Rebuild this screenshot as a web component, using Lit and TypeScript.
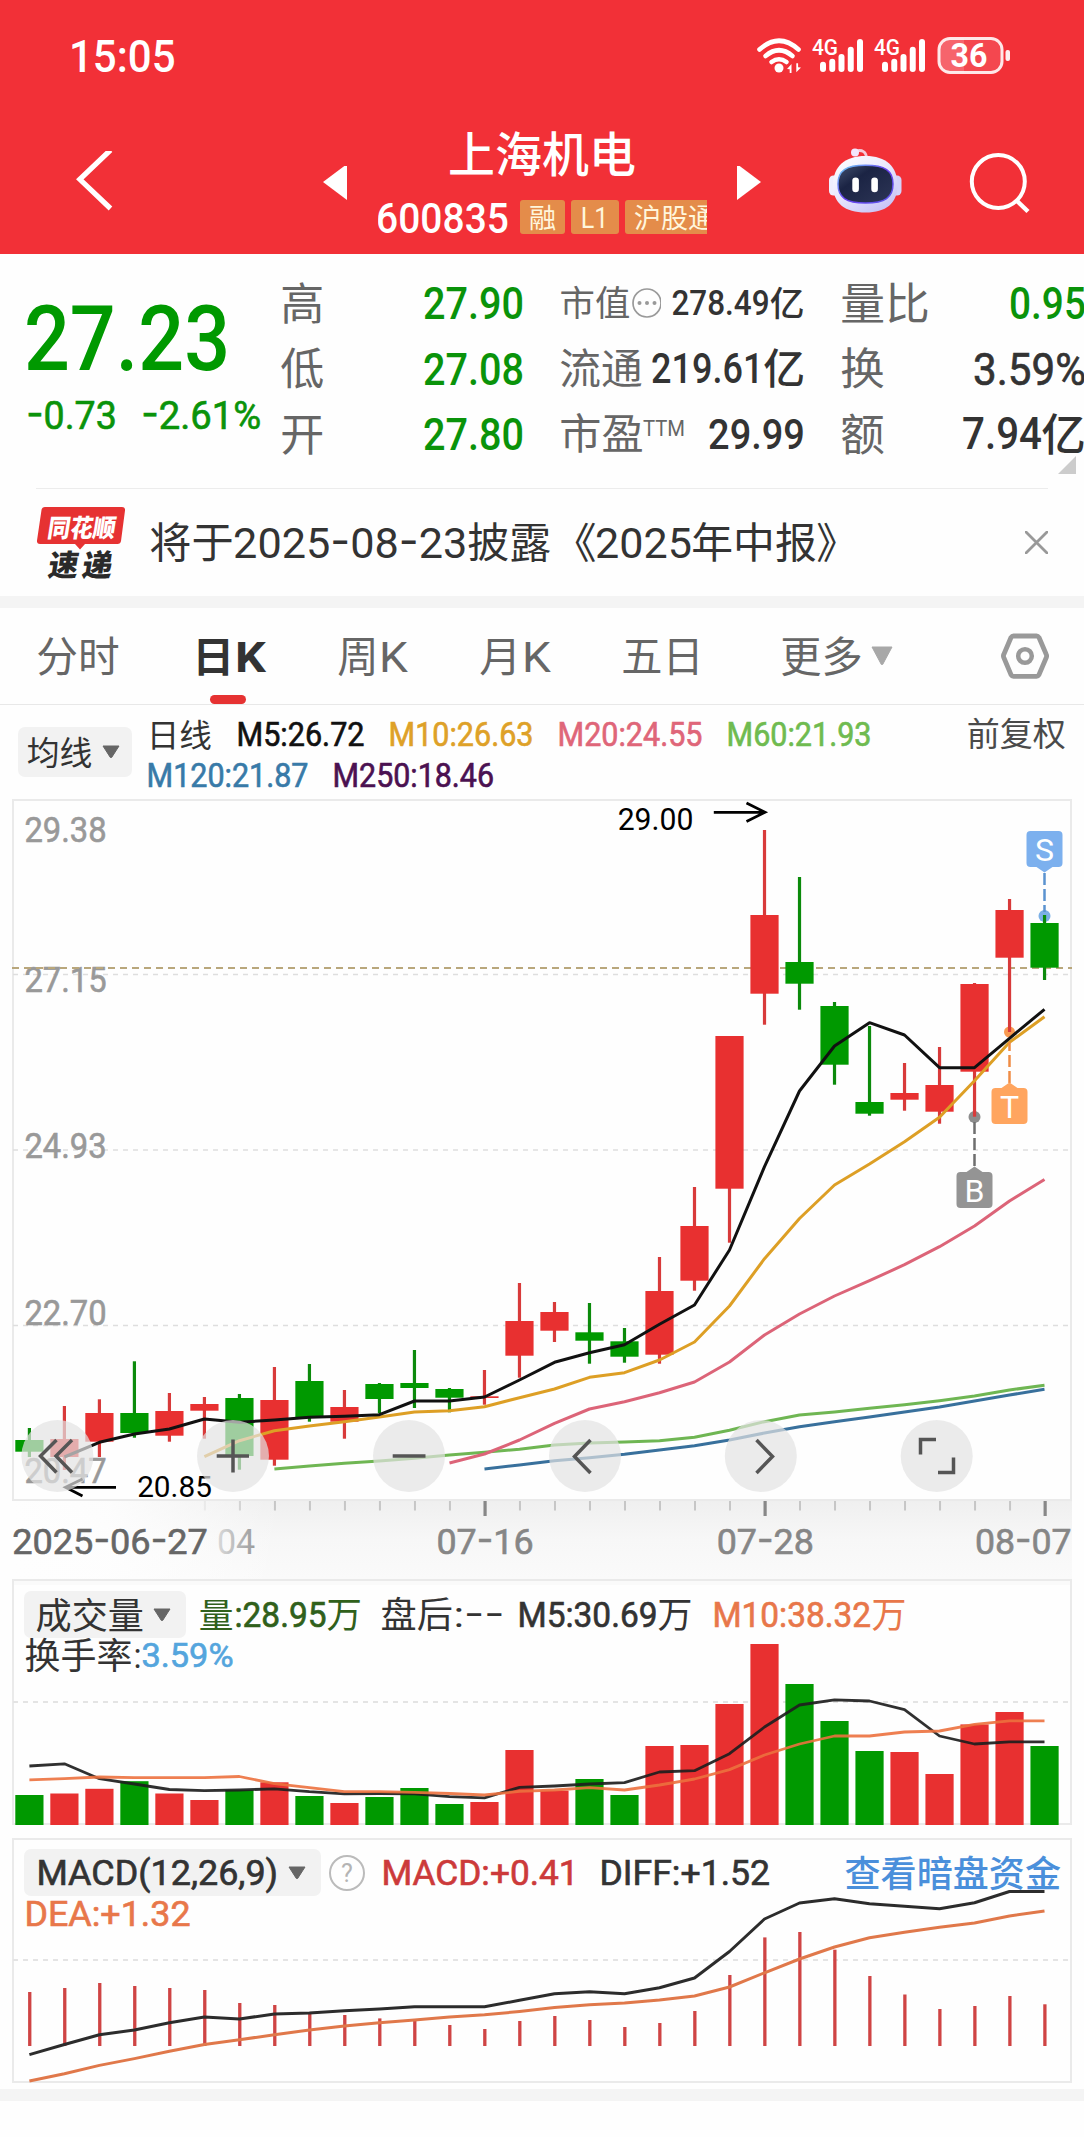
import { LitElement, html, svg, css, nothing } from "lit";
import { customElement } from "lit/decorators.js";

const RED = "#e83030";
const GREEN = "#009900";

/* Splits on hyphens so that dashes can use a wider, cap-centred glyph. */
const dashed = (s: string) =>
  s.split(/(-)/).filter(Boolean).map((p) => (p === "-" ? svg`<tspan class="dash">-</tspan>` : svg`<tspan>${p}</tspan>`));

/* Latin text: w is the ink width, cap the height of the capitals. */
const num = (s: string, w: number, cap: number, cls = "") => {
  const fs = cap / 0.711;
  return html`<svg class="t ${cls}" width=${w} height=${cap}>${svg`<text x=${-0.045 * fs} y=${cap} font-size=${fs} textLength=${w + 0.09 * fs} lengthAdjust="spacingAndGlyphs">${dashed(s)}</text>`}</svg>`;
};

/* Chinese text: w is the ink width, em the font size. */
const han = (s: string, w: number, em: number, cls = "") =>
  html`<svg class="t ${cls}" width=${w} height=${em * 0.92}>${svg`<text x=${-0.04 * em} y=${0.84 * em} font-size=${em} textLength=${w + 0.08 * em} lengthAdjust="spacingAndGlyphs">${s}</text>`}</svg>`;

/* Latin text placed on a chart canvas. */
const mark = (s: string, x: number, base: number, w: number, cap: number, cls: string) => {
  const fs = cap / 0.711;
  return svg`<text class=${cls} x=${x - 0.045 * fs} y=${base} font-size=${fs} textLength=${w + 0.09 * fs} lengthAdjust="spacingAndGlyphs">${dashed(s)}</text>`;
};

const X = (i: number) => 29.4 + i * 35.005;
const line = (start: number, ys: number[], color: string, w = 3) =>
  svg`<polyline fill="none" stroke=${color} stroke-width=${w} stroke-linejoin="round" points=${ys.map((y, k) => `${X(start + k).toFixed(1)},${y}`).join(" ")} />`;

/* body top, body bottom, high, low, rising */
const candles: [number, number, number, number, number][] = [
  [1440, 1451.7, 1428, 1457, 0], [1439, 1457, 1406, 1470, 1], [1413, 1441.7, 1399.3, 1457, 1],
  [1413, 1433, 1361.3, 1437.7, 0], [1411, 1435.7, 1393, 1441.7, 1], [1404, 1410.7, 1397, 1438.7, 1],
  [1398, 1456, 1394, 1469.7, 0], [1400, 1459.7, 1367, 1465.7, 1], [1381, 1417.7, 1364, 1421.7, 0],
  [1407, 1421.7, 1390, 1438.7, 1], [1384, 1399, 1383, 1413.3, 0], [1383, 1388, 1350, 1408, 0],
  [1389, 1397.7, 1388, 1412.3, 0], [1396.3, 1398, 1370, 1404.7, 1], [1321, 1355.7, 1283, 1377.7, 1],
  [1312, 1330.7, 1302, 1342, 1], [1332.3, 1340.7, 1303, 1363.7, 0], [1341.3, 1356.7, 1328, 1362.7, 0],
  [1291, 1354.7, 1257, 1363.7, 1], [1226, 1280.7, 1187, 1290.7, 1], [1036, 1188.7, 1036, 1242.7, 1],
  [915, 993.7, 830, 1024.7, 1], [962, 983.7, 877, 1009.7, 0], [1006, 1064.7, 1002, 1084.7, 0],
  [1102, 1113.7, 1026, 1115.7, 0], [1093, 1099.7, 1063, 1110.7, 1], [1085, 1111.7, 1047, 1123.7, 1],
  [984, 1071.7, 983, 1116.7, 1], [910, 957.7, 899, 1032, 1], [923, 967.7, 915, 980, 0],
];
const ma5 = [1457, 1442.3, 1434, 1429, 1419, 1422.3, 1420, 1417.3, 1416.3, 1414.7, 1401, 1401, 1397, 1380, 1362.3, 1352.7, 1344.7, 1324.3, 1305, 1250, 1166.7, 1091, 1046, 1022.7, 1035, 1067.7, 1067.7, 1038.3, 1009.3];
const ma10 = [1456.7, 1440.7, 1430.7, 1426, 1421.7, 1417, 1412, 1410.7, 1406.7, 1397.7, 1389, 1377.3, 1372.7, 1360, 1342, 1306, 1258.7, 1218.5, 1185, 1164, 1141.7, 1117.3, 1080.7, 1042.3, 1016.7];
const ma20 = [1463, 1454, 1440, 1423.3, 1409, 1401.7, 1392.7, 1382, 1362, 1335, 1314, 1296, 1280.7, 1264.7, 1246.7, 1226, 1201, 1179.5];
const ma60 = [1469, 1466, 1463.3, 1461, 1458.3, 1455, 1452.3, 1449.3, 1445, 1443, 1442, 1440.7, 1437.3, 1430.3, 1421.7, 1415, 1412, 1408.3, 1404.7, 1400.7, 1396, 1390, 1385.3];
const ma120 = [1469, 1465, 1460.7, 1457.7, 1454.3, 1450, 1445.7, 1440, 1433, 1426.7, 1421.7, 1417, 1412, 1407, 1401, 1395, 1389.3];

const vol = [1795, 1793.5, 1788.8, 1781.2, 1793.5, 1800, 1790, 1782.3, 1796, 1803, 1797, 1788, 1804, 1802, 1750, 1790.6, 1779, 1795, 1746, 1745, 1704, 1644, 1684, 1721, 1751, 1752, 1774, 1724.4, 1712, 1746];
const vol5 = [1766, 1763.8, 1778.7, 1784, 1789.5, 1790.6, 1790, 1788.8, 1791.7, 1793.8, 1793.5, 1793.8, 1796.7, 1797.8, 1787.3, 1786, 1784, 1782.6, 1772, 1770.7, 1753.7, 1727, 1705, 1699.8, 1701, 1709.6, 1736, 1744, 1741.8, 1741.8];
const vol10 = [1779.8, 1778.7, 1777, 1777.6, 1777.6, 1777.6, 1776.5, 1783.7, 1787.7, 1791.7, 1791.7, 1792.4, 1793.5, 1795, 1791.3, 1790, 1787.7, 1790, 1785, 1779, 1769.6, 1755, 1744, 1736, 1736, 1732, 1731, 1724.4, 1720.8, 1720.8];

const macd = [1992, 1988, 1983, 1986, 1988, 1990, 2003, 2005, 2012, 2015, 2018.4, 2021, 2025, 2029, 2021, 2016, 2020, 2027, 2023, 2011, 1975, 1937.4, 1932, 1949.7, 1976, 1994.5, 2009, 2006, 1996, 2004.3];
const diff = [2054.6, 2044.5, 2034.7, 2030, 2022.8, 2017, 2019, 2014, 2013, 2010.8, 2009, 2006.8, 2006.8, 2006.8, 2000.3, 1993.8, 1991.7, 1993.8, 1987.7, 1978, 1951.5, 1919, 1903, 1898.7, 1903.8, 1906.3, 1908.8, 1902.7, 1891.5, 1891.5];
const dea = [2081, 2073.8, 2065.4, 2058.6, 2051.3, 2044.5, 2039.8, 2034.7, 2030, 2026, 2022.8, 2020, 2017, 2014.8, 2011.5, 2007.6, 2004.7, 2003, 2000, 1996, 1987, 1972.8, 1959, 1947, 1937.8, 1932.3, 1927.3, 1923, 1916, 1911];

const caret = (w: number, h: number, color: string, cls = "") =>
  html`<svg class="t ${cls}" width=${w} height=${h} viewBox="0 0 ${w} ${h}"><path d="M1 0H${w - 1}L${w / 2 + 0.7} ${h - 0.6}H${w / 2 - 0.7}Z" fill=${color} stroke=${color} stroke-linejoin="round"/></svg>`;

@customElement("app-root")
export class AppRoot extends LitElement {
  static styles = css`
    :host {
      display: block;
      width: 1084px;
      height: 2137px;
      overflow: hidden;
      background: #fefefe;
      color: #333;
      font-family: Roboto, "Noto Sans CJK SC", sans-serif;
    }
    svg { display: block; flex: none; }
    .t { overflow: visible; fill: currentColor; }
    .dash { font-family: Inter, Roboto, sans-serif; font-feature-settings: "case"; }
    .m { font-weight: 500; }
    .n { stroke: currentColor; stroke-width: 0.65; }
    .b { font-weight: 700; }
    .row { display: flex; align-items: center; }

    .top { background: #f23037; color: #fff; height: 254px; }
    .status { height: 114px; box-sizing: border-box; padding: 0 73px 2px 71px; justify-content: space-between; }
    .status svg { overflow: visible; }
    .nav { height: 140px; display: grid; grid-template-columns: 76px 247px 24px 390px 24px 68px 73px 66px 66px; }
    .nav > svg { align-self: center; }
    .name { display: flex; flex-direction: column; align-items: center; padding-top: 18px; gap: 24.5px; }
    .code { display: flex; align-items: center; width: 329px; height: 34px; overflow-x: clip; overflow-y: visible; }
    .code > svg { margin-top: 2px; }
    .tags { display: flex; gap: 6px; margin-left: 13px; }
    .tag { background: #e48c4a; color: #fff6dc; height: 34px; border-radius: 3px; display: flex; align-items: center; justify-content: center; flex: none; }
    .tag1 { width: 45px; }
    .tag2 { width: 48px; }
    .tag3 { width: 100px; }

    .quote { display: flex; height: 234px; position: relative; }
    .main { width: 282px; box-sizing: border-box; padding: 52px 0 0 28px; color: #0a930a; }
    .price { color: #009900; margin-bottom: 31px; }
    .chg { display: flex; gap: 28px; }
    .stats { padding-top: 16px; width: 240px; margin-right: 39px; }
    .stats.wide { width: 242px; }
    .stats.last { margin-right: 0; }
    .stat { height: 65.5px; display: flex; align-items: center; justify-content: space-between; }
    .lab { color: #666; display: flex; align-items: center; }
    .val { display: flex; align-items: center; gap: 3px; }
    .up3 { margin-bottom: 12px; margin-left: 2px; }
    .g { color: #0a930a; }
    .corner { position: absolute; right: 8px; bottom: 14px; }

    .notice { margin: 0 36px; border-top: 1px solid #ececec; height: 107px; display: flex; align-items: center; padding-left: 1px; }
    .notice .msg { display: flex; align-items: center; gap: 3.2px; margin-left: 26px; flex: 1; }
    .open { margin-left: 1px; margin-right: -1px; }
    .band { height: 12px; background: #f4f4f4; }

    .tabs { height: 96px; border-bottom: 1px solid #e8e8e8; padding-left: 38px; display: grid; grid-template-columns: 160px 141px 143px 141px 159px 218px 48px; align-items: center; color: #666; }
    .tab { display: flex; align-items: center; gap: 4px; height: 100%; position: relative; }
    .tab.on { color: #333; }
    .tab.on::after { content: ""; position: absolute; left: 12px; bottom: 0; width: 36px; height: 9px; border-radius: 5px; background: #e63232; }
    .tab .car { margin-left: 6px; }
    .l4 { margin-left: -4px; }
    .l1 { margin-left: -1px; }

    .ma { height: 94px; display: grid; grid-template-columns: 130px 820px 1fr; padding-left: 18px; align-items: start; }
    .pick { background: #f2f2f2; border-radius: 7px; display: flex; align-items: center; justify-content: space-between; box-sizing: border-box; }
    .pick.p1 { width: 114px; height: 50px; padding: 0 12px 0 10px; margin-top: 22px; }
    .pick.p2 { width: 162px; height: 47px; padding: 0 15px 0 13px; }
    .pick.p3 { width: 297px; height: 47px; padding: 0 15px 0 14px; }
    .legend { padding-top: 15px; display: flex; flex-direction: column; gap: 13px; }
    .legend .row { height: 29px; }
    .legend .row.one { gap: 27px; }
    .legend .row.two { gap: 27px; height: 25px; }
    .adj { color: #4a4a4a; margin-top: 13px; }
    .c5 { color: #111; }
    .c10 { color: #dea128; }
    .c20 { color: #df6679; }
    .c60 { color: #6fbb50; }
    .c120 { color: #387aa8; }
    .c250 { color: #4b1151; }

    .panel { display: grid; }
    .panel > * { grid-area: 1 / 1; }
    .head { padding: 12px 25px 0 24px; z-index: 1; }
    .head .row { height: 47px; }
    .head .row.sub { height: 34px; padding-left: 2px; }
    .panel.second { margin-top: 12px; }
    .head.h3 { padding-top: 11px; }
    .cluster { display: flex; align-items: center; gap: 3.5px; }
    .s1 { margin-left: 14px; color: #30601b; }
    .s2 { margin-left: 21px; }
    .s3 { margin-left: 16px; }
    .s4 { margin-left: 23px; color: #e8774a; }
    .sky { color: #54a5dd; }
    .q { margin: 0 18px 0 8px; }
    .redt { color: #cc3a3a; }
    .dif { margin-left: 24px; }
    .link { margin-left: auto; color: #4a8fdb; }
    .or { color: #e8774a; }
    .end { margin-top: 6px; }

    .ax { fill: #999; stroke: #999; stroke-width: 0.6; }
    .pk { fill: #000; }
    .d1 { fill: #666; stroke: #666; stroke-width: 0.6; }
    .d2 { fill: #868686; stroke: #868686; stroke-width: 0.6; }
    .pin { fill: #fff; text-anchor: middle; font-size: 32px; }
    .sig { fill: #fff; font-weight: 500; }
    .batt { fill: #fff; font-weight: 700; }
    .logo { font-weight: 900; }
  `;

  status() {
    const bars = (x: number) =>
      [61.7, 58.7, 54, 46.7, 39].map((t, i) => svg`<rect x=${x + i * 9.25} y=${t} width="6" height=${72 - t} rx="3" fill="#fff"/>`);
    return html`<div class="status row">
      ${num("15:05", 102.5, 32, "m")}
      <svg width="254" height="40" viewBox="757 36 254 40">
        <g fill="none" stroke="#fff" stroke-width="4.6" stroke-linecap="round">
          <path d="M759.5 49.5Q779 32 798.500 49.5"/><path d="M765.500 56Q779 44.500 792.500 56"/><path d="M771.500 62Q779 56.500 786.500 62"/>
        </g>
        <circle cx="779" cy="68" r="4.5" fill="#fff"/>
        <path d="M787 69l4.500-5v9h-1.800v-3.800zM801 67.500l-4.700 4.700v-9h1.800v4z" fill="#fff"/>
        ${mark("4G", 813, 55, 24, 16, "sig")}${bars(820)}
        ${mark("4G", 875, 55, 24, 16, "sig")}${bars(882)}
        <rect x="939" y="38.500" width="63" height="34" rx="11" fill="#f4474f"/>
        <path d="M964 38.500H950a11 11 0 0 0-11 11v12a11 11 0 0 0 11 11h14z" fill="#f6646c"/>
        <rect x="939" y="38.500" width="63" height="34" rx="11" fill="none" stroke="#fff" stroke-opacity=".88" stroke-width="3"/>
        <rect x="1005.500" y="50" width="4.500" height="11" rx="2" fill="#fff" fill-opacity=".92"/>
        ${mark("36", 952, 67, 34, 23, "batt")}
      </svg>
    </div>`;
  }

  nav() {
    return html`<div class="nav">
      <span></span>
      <svg width="38" height="66" viewBox="76 151.500 38 66"><path d="M110.500 150.500L79.800 179.800L110.500 209" fill="none" stroke="#fff" stroke-width="5.200"/></svg>
      <svg width="24" height="36" viewBox="0 2 24 36"><path d="M24 0V36L0 18Z" fill="#fff"/></svg>
      <div class="name">
        ${han("上海机电", 184, 47.5, "m")}
        <div class="code">
          ${num("600835", 129, 30, "m")}
          <div class="tags">
            <span class="tag tag1">${han("融", 25, 27)}</span>
            <span class="tag tag2">${num("L1", 25, 21)}</span>
            <span class="tag tag3">${han("沪股通", 79, 27)}</span>
          </div>
        </div>
      </div>
      <svg width="24" height="36" viewBox="0 2 24 36"><path d="M0 0V36L24 18Z" fill="#fff"/></svg>
      <span></span>
      <svg width="73" height="72" viewBox="829 145 73 72">
        <defs>
          <linearGradient id="hd" x1="0" y1="0" x2=".7" y2="1"><stop offset="0" stop-color="#fff"/><stop offset=".5" stop-color="#ebeafe"/><stop offset="1" stop-color="#c9c4f6"/></linearGradient>
          <linearGradient id="fc" x1="0" y1="0" x2="1" y2="1"><stop offset="0" stop-color="#43506f"/><stop offset=".35" stop-color="#1b2444"/><stop offset="1" stop-color="#2d3556"/></linearGradient>
          <linearGradient id="rm" x1="0" y1="0" x2="1" y2="1"><stop offset="0" stop-color="#6fd3f5"/><stop offset=".5" stop-color="#6a3ff0"/><stop offset="1" stop-color="#5a55e8"/></linearGradient>
        </defs>
        <g transform="translate(0 -2.500)">
          <path d="M856 150.500C862 149 866.500 151 866.500 158" fill="none" stroke="#f5c9d8" stroke-width="2.800"/>
          <circle cx="855" cy="152" r="4" fill="#f3e6fb"/>
          <rect x="829" y="175" width="10" height="20" rx="4.500" fill="#efeefe"/>
          <rect x="891.500" y="175" width="10" height="20" rx="4.500" fill="#d5d2fa"/>
          <path d="M865.500 155.500C886 155.500 897.500 166 897.500 184.500S886 212 865.500 212S833 203 833 184.500S845 155.500 865.500 155.500Z" fill="url(#hd)"/>
          <path d="M865.500 164.800C885 164.800 893 170 893 183.500S885 202.500 865.500 202.500S838 197 838 183.500S846 164.800 865.500 164.800Z" fill="url(#fc)" stroke="url(#rm)" stroke-width="1.500"/>
          <rect x="852.300" y="177" width="6.600" height="14.800" rx="3.300" fill="#fff"/><rect x="871.300" y="177" width="6.600" height="14.800" rx="3.300" fill="#fff"/>
        </g>
      </svg>
      <span></span>
      <svg width="66" height="66" viewBox="968 150.500 66 66"><circle cx="998.300" cy="181" r="26.500" fill="none" stroke="#fff" stroke-width="4"/><path d="M1016 199.500L1028 211" stroke="#fff" stroke-width="4.500"/></svg>
    </div>`;
  }

  quote() {
    const stat = (l: unknown, v: unknown) => html`<div class="stat"><span class="lab">${l}</span><span class="val">${v}</span></div>`;
    return html`<section class="quote">
      <div class="main">
        <div class="price">${num("27.23", 198, 64, "m")}</div>
        <div class="chg">${num("-0.73", 87, 28, "n")}${num("-2.61%", 116.5, 28, "n")}</div>
      </div>
      <div class="stats">
        ${stat(han("高", 40.5, 44), num("27.90", 97, 31.5, "m g"))}
        ${stat(han("低", 40.5, 44), num("27.08", 97, 31.5, "m g"))}
        ${stat(han("开", 40.5, 44), num("27.80", 97, 31.5, "m g"))}
      </div>
      <div class="stats wide">
        ${stat(
          html`${han("市值", 68, 35)}<svg width="32" height="30" viewBox="0 0 32 30"><circle cx="18" cy="15" r="14" fill="none" stroke="#999" stroke-width="1.700"/><g fill="#999"><circle cx="10.500" cy="15" r="2"/><circle cx="18" cy="15" r="2"/><circle cx="25.500" cy="15" r="2"/></g></svg>`,
          html`${num("278.49", 95, 25, "m")}${han("亿", 32, 34.5, "m")}`
        )}
        ${stat(han("流通", 80, 42), html`${num("219.61", 108.5, 30, "m")}${han("亿", 38.5, 42, "m")}`)}
        ${stat(html`${han("市盈", 81, 42)}<span class="up3">${num("TTM", 40, 16)}</span>`, num("29.99", 93, 30, "m"))}
      </div>
      <div class="stats wide last">
        ${stat(han("量比", 86, 44), num("0.95", 73, 31.5, "m g"))}
        ${stat(han("换", 41, 44), num("3.59%", 109, 31.5, "n"))}
        ${stat(han("额", 41, 44), html`${num("7.94", 76, 31, "m")}${han("亿", 41, 44, "m")}`)}
      </div>
      <svg class="corner" width="18" height="18"><path d="M18 0V18H0Z" fill="#ccc"/></svg>
    </section>`;
  }

  notice() {
    return html`<section class="notice">
      <svg width="88" height="74" viewBox="37 505 88 74">
        <path d="M45 506H122Q125.500 506 125 509.500L121 540Q120.500 543 117.500 543H85L80 548.500L75 543H40Q36.500 543 37 539.500L41.500 509Q42 506 45 506Z" fill="#e63232"/>
        <g class="logo" transform="translate(80 535.500) skewX(-9)"><text x="-33.500" y="0" font-size="25" fill="#fff" textLength="68" lengthAdjust="spacingAndGlyphs">同花顺</text></g>
        <g class="logo" transform="translate(79 574.500) skewX(-9)"><text x="-32" y="0" font-size="30" fill="#2a2a2a">速</text><text x="2" y="0" font-size="30" fill="#2a2a2a">递</text></g>
      </svg>
      <div class="msg">
        ${han("将于", 81, 42)}${num("2025-08-23", 230.5, 30.5)}${han("披露", 80.5, 42)}${han("《", 41, 42, "open")}${num("2025", 93, 30.5)}${han("年中报", 122, 42)}${han("》", 38, 42)}
      </div>
      <svg width="23" height="23" viewBox="0 0 23 23"><path d="M1 1L22 22M22 1L1 22" stroke="#999" stroke-width="2.800" stroke-linecap="round"/></svg>
    </section>`;
  }

  tabs() {
    return html`<nav class="tabs">
      <span class="tab">${han("分时", 80, 42)}</span>
      <span class="tab on">${han("日", 38.6, 42, "b l4")}${num("K", 27, 30.5, "b")}</span>
      <span class="tab">${han("周", 38, 42)}${num("K", 25, 30.5)}</span>
      <span class="tab">${han("月", 38.6, 42, "l1")}${num("K", 25, 30.5)}</span>
      <span class="tab">${han("五日", 79, 42)}</span>
      <span class="tab">${han("更多", 79, 42)}${caret(22, 18, "#a8a8a8", "car")}</span>
      <svg width="50" height="48" viewBox="999 632 50 48"><path d="M1012.500 636H1035.500Q1037 636 1038 637.500L1045.300 654.500Q1046 656 1045.300 657.500L1038 674.700Q1037 676.300 1035.500 676.300H1012.500Q1011 676.300 1010 674.700L1002.800 657.500Q1002 656 1002.800 654.500L1010 637.500Q1011 636 1012.500 636Z" fill="none" stroke="#999" stroke-width="4.800"/><circle cx="1024" cy="656" r="6.800" fill="none" stroke="#999" stroke-width="4.500"/></svg>
    </nav>`;
  }

  averages() {
    return html`<section class="ma">
      <span class="pick p1">${han("均线", 63, 33)}${caret(18, 12, "#666")}</span>
      <div class="legend">
        <div class="row one">${han("日线", 62.5, 32)}<span class="c5">${num("M5:26.72", 125, 23.3, "n")}</span><span class="c10">${num("M10:26.63", 142, 23.3, "n")}</span><span class="c20">${num("M20:24.55", 142, 23.3, "n")}</span><span class="c60">${num("M60:21.93", 142, 23.3, "n")}</span></div>
        <div class="row two"><span class="c120">${num("M120:21.87", 159, 23.5, "n")}</span><span class="c250">${num("M250:18.46", 158.500, 23.5, "n")}</span></div>
      </div>
      <span class="adj">${han("前复权", 96.5, 33)}</span>
    </section>`;
  }

  priceChart() {
    const circle = (x: number) => svg`<circle cx=${x} cy="1456" r="36" fill="#e3e3e3" fill-opacity=".7"/>`;
    const grid = (y: number) => svg`<line x1="13" x2="1071" y1=${y} y2=${y} stroke="#dedede" stroke-width="1.500" stroke-dasharray="5 5"/>`;
    return html`<svg width="1084" height="780" viewBox="0 799 1084 780">
      <defs>
        <linearGradient id="axv" x1="0" y1="0" x2="0" y2="1"><stop offset="0" stop-color="#efefef"/><stop offset=".5" stop-color="#f7f7f7"/><stop offset="1" stop-color="#fafafa"/></linearGradient>
        <linearGradient id="axh" x1="0" y1="0" x2="1" y2="0"><stop offset="0" stop-color="#fefefe"/><stop offset=".35" stop-color="#fefefe" stop-opacity=".9"/><stop offset="1" stop-color="#fefefe" stop-opacity="0"/></linearGradient>
        <linearGradient id="fade" gradientUnits="userSpaceOnUse" x1="200" y1="0" x2="256" y2="0"><stop offset="0" stop-color="#f6f6f6"/><stop offset="1" stop-color="#9a9a9a"/></linearGradient>
      </defs>
      <rect x="12" y="1500" width="1060" height="79" fill="url(#axv)"/>
      <rect x="12" y="1500" width="270" height="79" fill="url(#axh)"/>
      <rect x="13" y="800" width="1058" height="700" fill="#fefefe" stroke="#eaeaea" stroke-width="2"/>
      ${[974.5, 1150, 1325.5].map(grid)}
      ${[["29.38", 842], ["27.15", 992], ["24.93", 1158], ["22.70", 1325], ["20.47", 1483]].map(([t, y]) => mark(t as string, 26, y as number, 79, 25.5, "ax"))}
      <line x1="12" x2="1072" y1="968" y2="968" stroke="#b9a77c" stroke-width="2" stroke-dasharray="7 5"/>
      <circle cx="1044.500" cy="916" r="6" fill="#7cb0e6"/><circle cx="1009.500" cy="1032" r="5.500" fill="#f99a50"/><circle cx="974.500" cy="1117" r="6" fill="#8c8c8c"/>
      ${candles.map(([t, b, h, l, up], i) => {
        const col = up ? RED : GREEN;
        return svg`<rect x=${X(i) - 1.6} y=${h} width="3.200" height=${l - h} fill=${up ? "#d83a3a" : "#0b8a0b"}/><rect x=${X(i) - 14.1} y=${t} width="28.200" height=${b - t} fill=${col}/>`;
      })}
      ${line(13, ma120, "#38709c")}${line(7, ma60, "#6fb653")}${line(12, ma20, "#dc6478")}${line(5, ma10, "#dd9f25")}${line(1, ma5, "#111")}
      ${mark("29.00", 619, 830, 73, 21.700, "pk")}
      <path d="M713.800 812.300H764M746.500 803L765 812.300L746.500 821.500" fill="none" stroke="#000" stroke-width="2.800"/>
      ${mark("20.85", 138.5, 1496.7, 72, 21.200, "pk")}
      <path d="M116 1487.300H66M82.500 1479L65.500 1487.300L82.500 1496" fill="none" stroke="#000" stroke-width="2.800"/>
      <g fill="none" stroke-width="2.500" stroke-dasharray="12 4">
        <path d="M1044.500 873V912" stroke="#5b93d0"/><path d="M1009.500 1083V1042" stroke="#ef8c45"/><path d="M974.500 1166V1122" stroke="#6e6e6e"/>
      </g>
      <path d="M1030.500 831h28q4 0 4 4v28q0 4-4 4h-6l-8 5.500l-8-5.500h-6q-4 0-4-4v-28q0-4 4-4z" fill="#7cb0ee"/>
      <path d="M995.500 1124h28q4 0 4-4v-28q0-4-4-4h-6l-8-5.500l-8 5.500h-6q-4 0-4 4v28q0 4 4 4z" fill="#ffa55f"/>
      <path d="M960.500 1208h28q4 0 4-4v-28q0-4-4-4h-6l-8-5.500l-8 5.500h-6q-4 0-4 4v28q0 4 4 4z" fill="#949494"/>
      <text class="pin" x="1044.500" y="860.500">S</text><text class="pin" x="1009.500" y="1117.500">T</text><text class="pin" x="974.500" y="1201.500">B</text>
      ${[57.4, 233, 409, 585, 760.8, 936.7].map(circle)}
      <g fill="none" stroke="#555" stroke-width="3.500">
        <path d="M56.500 1440L40.500 1456L56.500 1472.500M72 1440L56 1456L72 1472.500"/>
        <path d="M216.700 1456H249M233 1439.500V1472.500M392.700 1456H425.500"/>
        <path d="M590.500 1440L574.500 1456.500L590.500 1473M756.500 1440L772.500 1456.500L756.500 1473"/>
        <path d="M920.500 1454.500V1439.500H936M938 1472.500H953.500V1457.500"/>
      </g>
      ${candles.map((_, i) => {
        if (i < 5) return nothing;
        const major = i === 13 || i === 21 || i === 29;
        return svg`<rect x=${X(i) - (major ? 1.5 : 1) + 0.5} y="1501" width=${major ? 3.2 : 2} height=${major ? 15 : 9.5} fill=${major ? "#888" : "#c6c6c6"} opacity=${i === 5 ? 0.25 : i === 6 ? 0.7 : 1}/>`;
      })}
      <g fill="url(#fade)">${mark("04", 218.500, 1554, 35, 25.500, "d3")}</g>
      ${mark("2025-06-27", 13.8, 1554, 192.5, 25.500, "d1")}
      ${mark("07-16", 438, 1554, 94, 25.500, "d2")}
      ${mark("07-28", 718.3, 1554, 94, 25.500, "d2")}
      ${mark("08-07", 976.5, 1554, 93.500, 25.500, "d2")}
    </svg>`;
  }

  volumeChart() {
    return html`<section class="panel">
      <svg width="1084" height="247" viewBox="0 1579 1084 247">
        <rect x="13" y="1580" width="1058" height="244" fill="#fefefe" stroke="#eaeaea" stroke-width="2"/>
        <rect x="14" y="1581" width="1056" height="4" fill="#fafafa"/>
        <line x1="13" x2="1071" y1="1702" y2="1702" stroke="#e4e4e4" stroke-width="1.800" stroke-dasharray="5 5"/>
        ${vol.map((t, i) => svg`<rect x=${X(i) - 14.1} y=${t} width="28.200" height=${1825 - t} fill=${candles[i][4] ? RED : GREEN}/>`)}
        ${line(0, vol5, "rgba(30,30,30,.92)", 2.8)}${line(0, vol10, "rgba(236,113,62,.9)", 2.8)}
      </svg>
      <div class="head">
        <div class="row">
          <span class="pick p2">${han("成交量", 105.5, 36.5)}${caret(18, 12, "#666")}</span>
          <span class="cluster s1">${han("量", 32, 34)}${num(":28.95", 89, 24.5, "n")}${han("万", 32.5, 36)}</span>
          <span class="cluster s2">${han("盘后", 69.5, 36)}${num(":--", 48, 24.5)}</span>
          <span class="cluster s3">${num("M5:30.69", 137, 24.5, "n")}${han("万", 32, 36)}</span>
          <span class="cluster s4">${num("M10:38.32", 155.500, 24.5, "n")}${han("万", 32, 36)}</span>
        </div>
        <div class="row sub"><span class="cluster">${han("换手率", 105, 36.5)}${num(":", 5, 24.5)}<span class="sky">${num("3.59%", 89, 24.2, "n")}</span></span></div>
      </div>
    </section>`;
  }

  macdChart() {
    return html`<section class="panel second">
      <svg width="1084" height="245" viewBox="0 1838 1084 245">
        <rect x="13" y="1839" width="1058" height="243" fill="#fefefe" stroke="#eaeaea" stroke-width="2"/>
        <line x1="13" x2="1071" y1="1960" y2="1960" stroke="#e4e4e4" stroke-width="1.800" stroke-dasharray="5 5"/>
        ${macd.map((t, i) => svg`<rect x=${X(i) - 1.3} y=${t} width="3.300" height=${2046 - t} fill="#cf4444"/>`)}
        ${line(0, diff, "#2c2c2c")}${line(0, dea, "#e0784a")}
      </svg>
      <div class="head h3">
        <div class="row">
          <span class="pick p3">${num("MACD(12,26,9)", 238.500, 25.3, "n")}${caret(18, 12, "#666")}</span>
          <svg class="q" width="36" height="36" viewBox="0 0 36 36"><circle cx="18" cy="18" r="17" fill="none" stroke="#bbb" stroke-width="2"/><text x="18" y="27" font-size="25" text-anchor="middle" fill="#b4b4b4">?</text></svg>
          <span class="redt">${num("MACD:+0.41", 194, 25.2, "n")}</span>
          <span class="dif">${num("DIFF:+1.52", 167.500, 25.2, "n")}</span>
          <span class="link">${han("查看暗盘资金", 213.500, 36.500, "m")}</span>
        </div>
        <div class="row sub or">${num("DEA:+1.32", 163, 25, "n")}</div>
      </div>
    </section>`;
  }

  render() {
    return html`
      <header class="top">${this.status()}${this.nav()}</header>
      ${this.quote()}${this.notice()}
      <div class="band"></div>
      ${this.tabs()}${this.averages()}${this.priceChart()}${this.volumeChart()}${this.macdChart()}
      <div class="band end"></div>
    `;
  }
}
